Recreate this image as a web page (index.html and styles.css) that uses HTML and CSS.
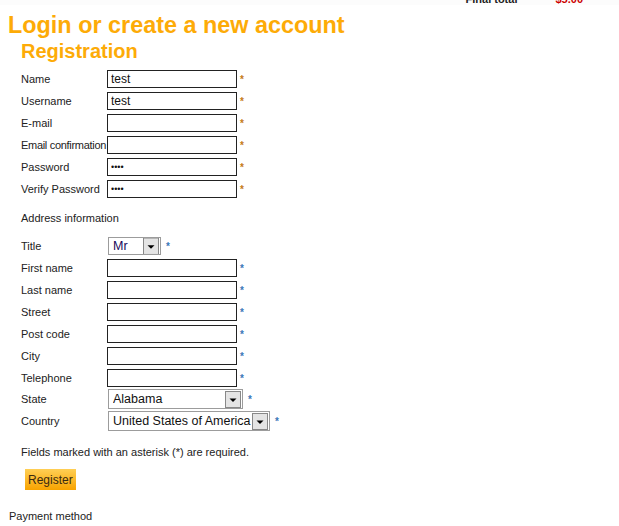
FILE: index.html
```html
<!DOCTYPE html>
<html lang="en">
<head>
    <meta charset="UTF-8">
    <title>Checkout - Login or create a new account</title>
    <link rel="stylesheet" href="styles.css">
</head>
<body>
    <div class="cart-total">
        <span class="total-label">Final total</span>
        <span class="total-value">$5.00</span>
    </div>

    <h1 class="page-title">Login or create a new account</h1>

    <div class="register-box">
        <h2>Registration</h2>

        <form class="register-form">
            <div class="form-grid">
                <label>Name</label>
                <input type="text" class="field" value="test">
                <span class="req">*</span>

                <label>Username</label>
                <input type="text" class="field" value="test">
                <span class="req">*</span>

                <label>E-mail</label>
                <input type="text" class="field">
                <span class="req">*</span>

                <label class="long">Email confirmation</label>
                <input type="text" class="field">
                <span class="req">*</span>

                <label>Password</label>
                <input type="password" class="field" value="test">
                <span class="req">*</span>

                <label>Verify Password</label>
                <input type="password" class="field" value="test">
                <span class="req">*</span>
            </div>

            <p class="section-title">Address information</p>

            <div class="form-grid address">
                <label>Title</label>
                <span class="select-wrap">
                    <select class="title-select"><option>Mr</option><option>Mrs</option><option>Ms</option></select>
                    <span class="req">*</span>
                </span>

                <label>First name</label>
                <input type="text" class="field">
                <span class="req">*</span>

                <label>Last name</label>
                <input type="text" class="field">
                <span class="req">*</span>

                <label>Street</label>
                <input type="text" class="field">
                <span class="req">*</span>

                <label>Post code</label>
                <input type="text" class="field">
                <span class="req">*</span>

                <label>City</label>
                <input type="text" class="field">
                <span class="req">*</span>

                <label>Telephone</label>
                <input type="text" class="field">
                <span class="req">*</span>

                <label class="tight">State</label>
                <span class="select-wrap tight">
                    <select class="state-select"><option>Alabama</option><option>Alaska</option></select>
                    <span class="req">*</span>
                </span>

                <label class="tight">Country</label>
                <span class="select-wrap tight">
                    <select class="country-select"><option>United States of America</option></select>
                    <span class="req">*</span>
                </span>
            </div>

            <p class="note">Fields marked with an asterisk (*) are required.</p>

            <button type="button" class="register-btn">Register</button>
        </form>
    </div>

    <p class="payment-title">Payment method</p>
</body>
</html>
```

FILE: styles.css
```css
* {
    box-sizing: border-box;
}

body {
    margin: 0;
    background: #fff;
    color: #222;
    font-family: "Liberation Sans", Arial, sans-serif;
    font-size: 11px;
}

/* Cart summary strip (scrolled mostly out of view) */
.cart-total {
    height: 5px;
    overflow: hidden;
    display: flex;
    justify-content: flex-end;
    align-items: flex-end;
    padding-right: 36px;
    background: #fcfcfc;
    font-size: 11px;
    line-height: 11px;
}

.total-label {
    color: #222;
    font-weight: bold;
    margin-right: 38px;
}

.total-value {
    color: #c00;
    font-weight: bold;
}

.page-title {
    margin: 7px 0 0 8px;
    color: #fdab07;
    font-size: 23.4px;
    line-height: 27px;
}

.register-box {
    padding-left: 21px;
}

.register-box h2 {
    margin: 0 0 7px 0;
    color: #fdab07;
    font-size: 20px;
    line-height: 24px;
}

.form-grid {
    display: grid;
    grid-template-columns: 86px 130px auto;
    row-gap: 4px;
    align-items: center;
}

.form-grid label {
    line-height: 18px;
    white-space: nowrap;
}

.form-grid .long {
    letter-spacing: -0.3px;
}

.field {
    width: 130px;
    height: 18px;
    margin: 0;
    padding: 0 3px;
    border: 1px solid #222;
    font-family: "Liberation Sans", Arial, sans-serif;
    font-size: 12px;
    color: #111;
    background: #fff;
}

input[type="password"].field {
    font-size: 9px;
    letter-spacing: 0;
}

.req {
    margin-left: 3px;
    color: #c47a17;
    font-size: 10px;
    font-weight: bold;
}

.address .req {
    color: #3a78b8;
}

.section-title {
    margin: 14px 0 13px 0;
}

.select-wrap {
    grid-column: span 2;
    display: flex;
    align-items: center;
    white-space: nowrap;
}

.select-wrap .req {
    margin-left: 5px;
}

.form-grid .tight {
    margin-top: -2px;
}

select {
    flex-shrink: 0;
    appearance: none;
    -webkit-appearance: none;
    height: 19px;
    margin: 0 0 0 1px;
    padding: 0 20px 0 4px;
    border: 1px solid #9c9c9c;
    border-radius: 0;
    font-family: "Liberation Sans", Arial, sans-serif;
    font-size: 12.5px;
    color: #111;
    /* dropdown button: grey box with a black triangle */
    background:
        url("data:image/svg+xml;utf8,<svg xmlns='http://www.w3.org/2000/svg' width='16' height='17'><rect x='0.5' y='0.5' width='15' height='16' fill='%23e4e4e4' stroke='%23888'/><path d='M4.5 7.5h7l-3.5 3.5z' fill='%23000'/></svg>") no-repeat right 1px center,
        #fff;
}

.title-select {
    width: 53px;
    height: 18px;
    color: #1a0a5a;
}

.state-select {
    width: 135px;
    height: 20px;
}

.country-select {
    width: 162px;
    height: 20px;
    padding-right: 17px;
}

.note {
    margin: 15px 0 11px 0;
}

.register-btn {
    margin-left: 4px;
    height: 21px;
    padding: 0 3px;
    border: none;
    background: linear-gradient(#ffcf55, #f8a300);
    color: #3a2a10;
    font-family: "Liberation Sans", Arial, sans-serif;
    font-size: 12px;
}

.payment-title {
    margin: 20px 0 0 9px;
}
```
